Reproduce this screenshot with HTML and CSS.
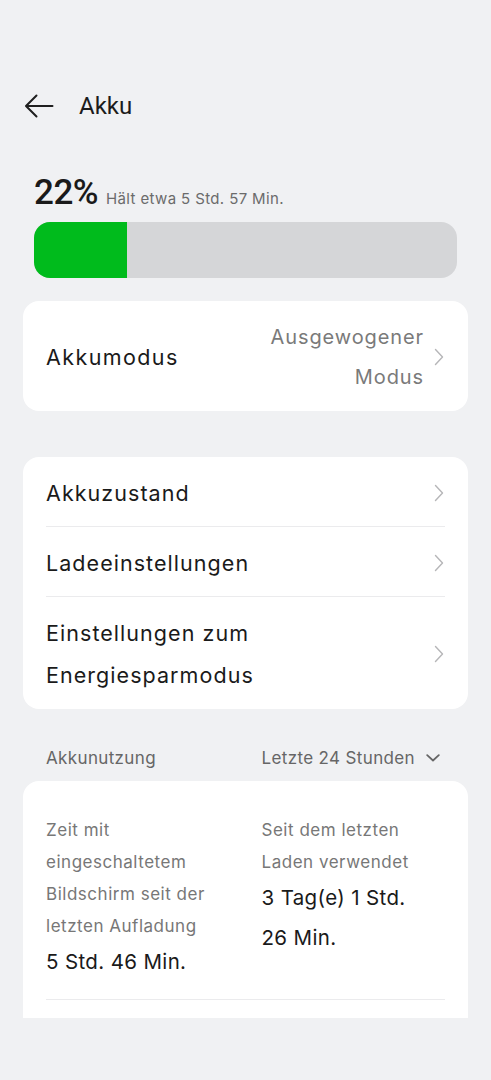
FILE: index.html
```html
<!DOCTYPE html>
<html lang="de">
<head>
<meta charset="utf-8">
<link rel="stylesheet" href="styles.css">
</head>
<body>
<div class="page">
  <header class="topbar">
    <svg class="back" width="30" height="24" viewBox="0 0 30 24"><path d="M28.5 12H2.5M12.5 1.5L2 12l10.5 10.5" fill="none" stroke="#1f1f1f" stroke-width="2" stroke-linecap="round" stroke-linejoin="round"/></svg>
    <h1 class="title">Akku</h1>
  </header>

  <section class="summary">
    <div class="level"><span class="pct">22%</span><span class="remain">Hält etwa 5 Std. 57 Min.</span></div>
    <div class="bar"><div class="fill" style="width:22%"></div></div>
  </section>

  <div class="card">
    <div class="row mode">
      <span class="label">Akkumodus</span>
      <span class="value">Ausgewogener<br>Modus</span>
      <svg class="chev" width="10" height="18" viewBox="0 0 10 18"><path d="M1.5 1.5L8.5 9L1.5 16.5" fill="none" stroke="#b6b6b8" stroke-width="1.4" stroke-linecap="round" stroke-linejoin="round"/></svg>
    </div>
  </div>

  <div class="card list">
    <div class="row item">
      <span class="label">Akkuzustand</span>
      <svg class="chev" width="10" height="18" viewBox="0 0 10 18"><path d="M1.5 1.5L8.5 9L1.5 16.5" fill="none" stroke="#b6b6b8" stroke-width="1.4" stroke-linecap="round" stroke-linejoin="round"/></svg>
    </div>
    <div class="row item">
      <span class="label">Ladeeinstellungen</span>
      <svg class="chev" width="10" height="18" viewBox="0 0 10 18"><path d="M1.5 1.5L8.5 9L1.5 16.5" fill="none" stroke="#b6b6b8" stroke-width="1.4" stroke-linecap="round" stroke-linejoin="round"/></svg>
    </div>
    <div class="row item">
      <span class="label">Einstellungen zum<br>Energiesparmodus</span>
      <svg class="chev" width="10" height="18" viewBox="0 0 10 18"><path d="M1.5 1.5L8.5 9L1.5 16.5" fill="none" stroke="#b6b6b8" stroke-width="1.4" stroke-linecap="round" stroke-linejoin="round"/></svg>
    </div>
  </div>

  <div class="section-head">
    <span>Akkunutzung</span>
    <span class="period">Letzte 24 Stunden
      <svg width="14" height="8" viewBox="0 0 14 8"><path d="M1.2 1.2L7 6.5l5.8-5.3" fill="none" stroke="#666" stroke-width="1.8" stroke-linecap="round" stroke-linejoin="round"/></svg>
    </span>
  </div>

  <div class="card usage">
    <div class="stats">
      <div class="stat">
        <div class="stat-label">Zeit mit<br>eingeschaltetem<br>Bildschirm seit der<br>letzten Aufladung</div>
        <div class="stat-value">5 Std. 46 Min.</div>
      </div>
      <div class="stat">
        <div class="stat-label">Seit dem letzten<br>Laden verwendet</div>
        <div class="stat-value">3 Tag(e) 1 Std.<br>26 Min.</div>
      </div>
    </div>
    <div class="divider"></div>
  </div>
</div>
</body>
</html>
```

FILE: styles.css
```css
* { box-sizing: border-box; }
html, body { margin: 0; padding: 0; }
body {
  background: #f0f1f3;
  font-family: Inter, Roboto, "Liberation Sans", sans-serif;
  color: #1c1c1c;
  width: 491px;
  height: 1080px;
  overflow: hidden;
}
.page {
  padding: 0 23px;
}
.topbar {
  margin-top: 82px;
  height: 48px;
  display: flex;
  align-items: center;
}
.back {
  margin-left: 1px;
  flex: none;
}
.title {
  margin: 0 0 0 25px;
  font-family: Roboto, "Liberation Sans", sans-serif;
  font-size: 24px;
  font-weight: 400;
  color: #1c1c1c;
}
.summary {
  padding: 0 11px;
  margin-top: 42px;
}
.level {
  display: flex;
  align-items: baseline;
  height: 40px;
}
.pct {
  font-family: Roboto, "Liberation Sans", sans-serif;
  font-size: 35px;
  font-weight: 500;
  letter-spacing: -0.5px;
  color: #1a1a1a;
}
.remain {
  margin-left: 8px;
  font-size: 15px;
  letter-spacing: 0.37px;
  color: #6b6b6b;
}
.bar {
  margin-top: 10px;
  height: 56px;
  border-radius: 16px;
  background: #d5d6d8;
  overflow: hidden;
}
.fill {
  height: 100%;
  background: #00bb1c;
}
.card {
  background: #fff;
  border-radius: 16px;
  margin-top: 23px;
  padding: 0 23px;
}
.row {
  display: flex;
  align-items: center;
}
.label {
  flex: 1;
  font-size: 21.5px;
  line-height: 42px;
  letter-spacing: 1.05px;
  color: #1a1a1a;
}
.chev { flex: none; margin-left: 10px; margin-right: 1px; }
.mode {
  height: 110px;
  padding-top: 2px;
}
.mode .label { letter-spacing: 1.4px; }
.mode .value {
  text-align: right;
  font-size: 20px;
  line-height: 40px;
  letter-spacing: 0.9px;
  color: #7a7a7a;
}
.list { margin-top: 46px; }
.item {
  padding: 15px 0 12px;
  border-bottom: 1px solid #ebebed;
}
.item:last-child { border-bottom: none; padding-bottom: 13px; }
.section-head {
  display: flex;
  justify-content: space-between;
  align-items: center;
  padding: 0 28px 0 23px;
  margin-top: 36px;
  height: 26px;
  font-size: 17px;
  letter-spacing: 0.36px;
  color: #666;
}
.period { display: flex; align-items: center; gap: 11px; }
.usage {
  margin-top: 10px;
  border-radius: 16px 16px 0 0;
  padding-top: 33px;
  height: 237px;
}
.stats {
  display: grid;
  grid-template-columns: 1fr 1fr;
  column-gap: 32px;
}
.stat-label {
  font-size: 17px;
  line-height: 32px;
  letter-spacing: 0.52px;
  color: #777;
}
.stat-value {
  font-size: 20.5px;
  line-height: 40px;
  letter-spacing: 0.36px;
  color: #1a1a1a;
}
.divider {
  margin-top: 17px;
  border-top: 1px solid #ebebed;
}
```
